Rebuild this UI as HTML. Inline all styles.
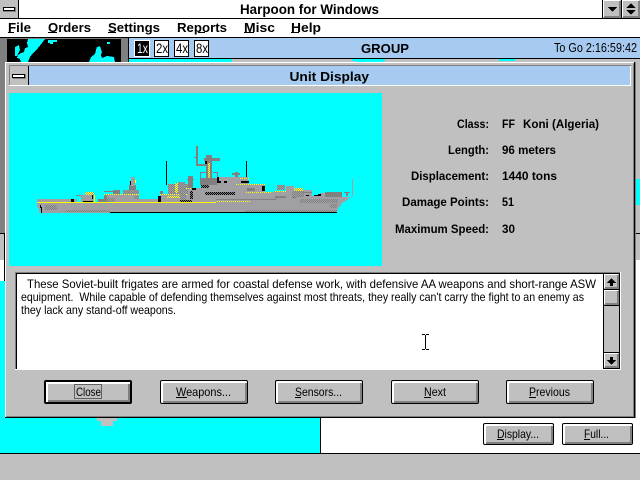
<!DOCTYPE html>
<html><head><meta charset="utf-8"><title>Harpoon for Windows</title>
<style>
html,body{margin:0;padding:0;width:640px;height:480px;overflow:hidden;background:#c0c0c0}
svg{position:absolute;left:0;top:0}
.b{position:absolute;box-sizing:border-box;border:1px solid #000;border-radius:2px;background:#c0c0c0;box-shadow:inset 2px 2px 0 #fff,inset -2px -2px 0 #808080}
text{font-family:"Liberation Sans",sans-serif;fill:#000;font-size:12px}
.bd{font-weight:bold}
.t{font-size:13px;font-weight:bold}
</style></head><body>
<svg width="640" height="480" shape-rendering="crispEdges">
<defs>
<pattern id="d" width="2" height="2" patternUnits="userSpaceOnUse"><rect width="2" height="2" fill="#a0a0a4"/><rect width="1" height="1" fill="#808080"/><rect x="1" y="1" width="1" height="1" fill="#808080"/></pattern>
<pattern id="k" width="2" height="2" patternUnits="userSpaceOnUse"><rect width="2" height="2" fill="#808080"/><rect width="1" height="1" fill="#000"/><rect x="1" y="1" width="1" height="1" fill="#000"/></pattern>
<pattern id="y" width="2" height="2" patternUnits="userSpaceOnUse"><rect width="2" height="2" fill="#a0a0a4"/><rect width="1" height="1" fill="#ff0"/><rect x="1" y="1" width="1" height="1" fill="#ff0"/></pattern>
</defs>
<rect width="640" height="480" fill="#c0c0c0"/>
<!-- title bar -->
<rect width="640" height="18" fill="#fff"/>
<rect y="18" width="640" height="1" fill="#000"/>
<rect width="18" height="18" fill="#c0c0c0"/>
<rect x="18" width="1" height="18" fill="#000"/>
<rect x="3" y="7" width="13" height="5" fill="#808080"/>
<rect x="3" y="7" width="12" height="4" fill="#000"/>
<rect x="4" y="8" width="10" height="2" fill="#fff"/>
<rect x="602" width="1" height="18" fill="#000"/>
<rect x="603" width="18" height="18" fill="#c0c0c0"/>
<rect x="603" width="17" height="1" fill="#fff"/><rect x="603" width="1" height="17" fill="#fff"/>
<rect x="604" y="16" width="17" height="2" fill="#808080"/><rect x="619" y="1" width="2" height="17" fill="#808080"/>
<rect x="621" width="1" height="18" fill="#000"/>
<rect x="622" width="18" height="18" fill="#c0c0c0"/>
<rect x="622" width="17" height="1" fill="#fff"/><rect x="622" width="1" height="17" fill="#fff"/>
<rect x="623" y="16" width="17" height="2" fill="#808080"/><rect x="638" y="1" width="2" height="17" fill="#808080"/>
<path d="M608 7h9l-4.500 5z" fill="#000"/>
<path d="M626.500 8h9l-4.500-5zM626.500 10h9l-4.500 5z" fill="#000"/>
<!-- menu -->
<rect y="19" width="640" height="18" fill="#fff"/>
<rect y="37" width="640" height="1" fill="#000"/>
<!-- left map panel -->
<rect y="38" width="128" height="195" fill="#808080"/>
<rect x="128" y="38" width="1" height="24" fill="#000"/>
<rect x="7" y="39" width="114" height="24" fill="#000"/>
<path d="M28 39h17l-3 4-4 5-5 5-3 4-2 5h-7l-1-3-3-1 1-3 3-2 3-1 1-4 3-1-1-4zM15 47l4-2 1 5-2 4-1 2-2 0z" fill="#0ff"/>
<path d="M48 40h9v2h-4v2h-3v-1h-2zM107 42h3v2h-3zM97 47l3-1 2 6-1 3 1 3 5-2 7 1 1 5h-26l2-5 4-3 1-4z" fill="#0ff"/>
<!-- toolbar -->
<rect x="129" y="38" width="511" height="20" fill="#a6caf0"/>
<rect x="129" y="58" width="511" height="1" fill="#000"/>
<rect x="129" y="59" width="511" height="4" fill="#c0c0c0"/>
<rect x="129" y="59" width="103" height="4" fill="#0ff"/>
<rect x="352" y="59" width="33" height="2" fill="#0ff"/><rect x="356" y="61" width="27" height="2" fill="#0ff"/>
<rect x="499" y="59" width="16" height="2" fill="#0ff"/>
<rect x="134" y="40" width="16" height="17" fill="#fff"/><rect x="135" y="41" width="14" height="15" fill="#000"/>
<rect x="154" y="40" width="15" height="17" fill="#000"/><rect x="155" y="41" width="13" height="15" fill="#fff"/>
<rect x="174" y="40" width="15" height="17" fill="#000"/><rect x="175" y="41" width="13" height="15" fill="#fff"/>
<rect x="194" y="40" width="15" height="17" fill="#000"/><rect x="195" y="41" width="13" height="15" fill="#fff"/>
<!-- underlying regions -->
<rect y="233" width="5" height="1" fill="#000"/>
<rect y="260" width="4" height="21" fill="#fff"/>
<rect x="4" y="234" width="1" height="47" fill="#000"/>
<rect x="635" y="233" width="5" height="1" fill="#000"/>
<rect x="635" y="179" width="5" height="26" fill="#0ff"/>
<rect x="635" y="260" width="5" height="158" fill="#fff"/>
<rect y="281" width="5" height="137" fill="#0ff"/>
<rect y="418" width="320" height="35" fill="#0ff"/>
<rect x="97" y="418" width="20" height="3" fill="#c0c0c0"/><rect x="101" y="421" width="12" height="5" fill="#c0c0c0"/>
<rect x="320" y="418" width="320" height="35" fill="#fff"/>
<rect x="320" y="418" width="1" height="35" fill="#000"/>
<rect y="453" width="640" height="1" fill="#000"/>
<!-- dialog -->
<rect x="5" y="62" width="629" height="355" fill="#c0c0c0"/>
<rect x="5" y="62" width="629" height="1" fill="#fff"/>
<rect x="5" y="62" width="1" height="355" fill="#fff"/>
<rect x="634" y="62" width="1" height="356" fill="#000"/>
<rect x="635" y="62" width="1" height="356" fill="#808080"/>
<rect x="5" y="417" width="630" height="1" fill="#000"/>
<rect x="6" y="416" width="628" height="1" fill="#808080"/>
<rect x="633" y="63" width="1" height="354" fill="#808080"/>
<rect x="9" y="65" width="622" height="1" fill="#808080"/>
<rect x="9" y="66" width="621" height="19" fill="#a6caf0"/>
<rect x="9" y="85" width="622" height="1" fill="#fff"/>
<rect x="630" y="66" width="1" height="20" fill="#fff"/>
<rect x="9" y="66" width="19" height="19" fill="#c0c0c0"/>
<rect x="9" y="66" width="1" height="19" fill="#808080"/>
<rect x="28" y="66" width="1" height="19" fill="#000"/>
<rect x="13" y="74" width="13" height="5" fill="#808080"/>
<rect x="12" y="74" width="13" height="4" fill="#000"/>
<rect x="13" y="75" width="11" height="2" fill="#fff"/>
<!-- ship picture -->
<rect x="9" y="93" width="373" height="173" fill="#0ff"/>
<g>
<!-- masts and lattice -->
<rect x="166" y="161" width="1" height="24" fill="#000"/>
<rect x="246" y="161" width="1" height="16" fill="#000"/>
<rect x="352" y="179" width="1" height="17" fill="#a0a0a4"/>
<rect x="196" y="146" width="2" height="20" fill="#808080"/>
<rect x="194" y="157" width="3" height="1" fill="#808080"/>
<rect x="197" y="164" width="10" height="2" fill="#808080"/>
<rect x="204" y="158" width="16" height="3" fill="#808080"/>
<rect x="206" y="155" width="6" height="25" fill="#808080"/>
<rect x="208" y="163" width="2" height="15" fill="url(#y)"/>
<rect x="205" y="161" width="2" height="3" fill="#000"/>
<rect x="200" y="172" width="6" height="1" fill="#808080"/><rect x="200" y="172" width="1" height="6" fill="#808080"/>
<rect x="213" y="172" width="5" height="1" fill="#808080"/><rect x="217" y="172" width="1" height="6" fill="#808080"/>
<rect x="232" y="173" width="8" height="2" fill="#808080"/><rect x="235" y="172" width="3" height="5" fill="#808080"/>
<!-- solid silhouette -->
<path d="M160 203v-9h8v-10h20v-8h5v12h8v-4h16v-7h31v8h17v7h21v-6h8v10h7v-6h11v6h8v-3h22v10z" fill="#a0a0a4"/>
<!-- aft details -->
<rect x="37" y="199" width="40" height="3" fill="#a0a0a4"/>
<rect x="76" y="195" width="7" height="1" fill="#808080"/>
<rect x="81" y="195" width="14" height="7" fill="#a0a0a4"/>
<rect x="85" y="192" width="9" height="3" fill="url(#y)"/>
<rect x="92" y="195" width="1" height="4" fill="#000"/>
<rect x="94" y="195" width="1" height="7" fill="#ff0"/>
<rect x="83" y="201" width="10" height="1" fill="#000"/>
<rect x="71" y="199" width="3" height="3" fill="#000"/>
<rect x="98" y="199" width="6" height="3" fill="#808080"/>
<rect x="104" y="191" width="9" height="1" fill="#808080"/>
<rect x="113" y="190" width="7" height="4" fill="#808080"/>
<rect x="123" y="190" width="16" height="4" fill="url(#d)"/>
<rect x="129" y="185" width="7" height="5" fill="#808080"/>
<rect x="131" y="177" width="4" height="9" fill="#a0a0a4"/>
<rect x="130" y="181" width="1" height="4" fill="#000"/><rect x="135" y="180" width="1" height="3" fill="#ff0"/>
<rect x="104" y="194" width="35" height="8" fill="#a0a0a4"/>
<rect x="104" y="194" width="35" height="1" fill="url(#y)"/>
<rect x="104" y="195" width="3" height="7" fill="#808080"/>
<rect x="107" y="198" width="8" height="4" fill="url(#d)"/>
<rect x="134" y="196" width="5" height="3" fill="url(#d)"/>
<rect x="139" y="199" width="21" height="3" fill="#a0a0a4"/>
<rect x="158" y="196" width="3" height="6" fill="#000"/>
<!-- forward details -->
<rect x="160" y="194" width="27" height="1" fill="url(#y)"/>
<rect x="167" y="196" width="16" height="2" fill="url(#y)"/>
<rect x="180" y="200" width="12" height="2" fill="url(#k)"/>
<rect x="160" y="191" width="3" height="3" fill="#808080"/>
<rect x="168" y="184" width="20" height="10" fill="url(#d)"/>
<rect x="175" y="183" width="3" height="10" fill="url(#y)"/>
<rect x="178" y="182" width="7" height="3" fill="url(#d)"/>
<rect x="188" y="176" width="5" height="12" fill="#808080"/>
<rect x="187" y="179" width="7" height="1" fill="#808080"/>
<rect x="180" y="188" width="6" height="12" fill="url(#d)"/>
<rect x="186" y="188" width="7" height="1" fill="url(#y)"/>
<rect x="192" y="188" width="4" height="2" fill="#000"/>
<rect x="190" y="191" width="3" height="8" fill="url(#k)"/>
<rect x="200" y="178" width="17" height="7" fill="#808080"/>
<rect x="201" y="185" width="8" height="3" fill="url(#k)"/>
<rect x="205" y="192" width="30" height="3" fill="url(#k)"/>
<rect x="217" y="177" width="2" height="4" fill="#000"/>
<rect x="217" y="181" width="4" height="2" fill="#000"/>
<rect x="224" y="181" width="3" height="2" fill="#000"/>
<rect x="239" y="178" width="10" height="1" fill="url(#y)"/>
<rect x="241" y="181" width="8" height="2" fill="#000"/>
<rect x="236" y="184" width="29" height="1" fill="url(#y)"/>
<rect x="247" y="188" width="8" height="3" fill="#808080"/>
<rect x="262" y="186" width="3" height="5" fill="#000"/>
<rect x="246" y="192" width="25" height="1" fill="url(#y)"/>
<rect x="277" y="185" width="8" height="5" fill="url(#d)"/>
<rect x="274" y="191" width="12" height="1" fill="url(#y)"/>
<rect x="275" y="196" width="11" height="3" fill="#808080"/>
<rect x="292" y="191" width="12" height="6" fill="url(#d)"/>
<rect x="294" y="188" width="9" height="3" fill="url(#y)"/>
<rect x="293" y="197" width="6" height="2" fill="url(#k)"/>
<rect x="303" y="192" width="9" height="1" fill="#808080"/>
<rect x="306" y="195" width="3" height="1" fill="#000"/><rect x="314" y="195" width="4" height="1" fill="#000"/><rect x="318" y="194" width="3" height="2" fill="#000"/>
<rect x="325" y="192" width="17" height="5" fill="#808080"/>
<rect x="344" y="192" width="6" height="1" fill="#808080"/><rect x="346" y="192" width="2" height="4" fill="#808080"/>
<!-- hull -->
<path d="M37 203h178v-4h50l35 -2h52v-2h1l-7 6-3 1-5 7-2 4h-294l-3-1v-3l-2-2z" fill="#a0a0a4"/>
<rect x="37" y="202" width="179" height="1" fill="#ff0"/>
<rect x="216" y="199" width="60" height="1" fill="#808080"/>
<rect x="216" y="201" width="35" height="1" fill="url(#y)"/>
<rect x="65" y="210" width="45" height="2" fill="url(#d)"/>
<rect x="45" y="205" width="12" height="5" fill="url(#d)"/>
<rect x="245" y="210" width="92" height="2" fill="url(#d)"/>
<rect x="300" y="199" width="38" height="4" fill="url(#d)"/>
<rect x="330" y="204" width="7" height="4" fill="url(#d)"/>
<rect x="110" y="212" width="227" height="1" fill="#000"/>
<rect x="40" y="205" width="1" height="3" fill="#000"/><rect x="41" y="207" width="1" height="6" fill="#000"/>
</g>
<!-- text box -->
<rect x="15" y="272" width="606" height="98" fill="#fff"/>
<rect x="15" y="272" width="605" height="1" fill="#808080"/>
<rect x="15" y="272" width="1" height="97" fill="#808080"/>
<rect x="16" y="273" width="604" height="1" fill="#000"/>
<rect x="16" y="273" width="1" height="96" fill="#000"/>
<!-- scrollbar -->
<rect x="603" y="273" width="17" height="96" fill="#000"/>
<rect x="604" y="274" width="15" height="94" fill="#c0c0c0"/>
<rect x="604" y="289" width="15" height="1" fill="#000"/>
<rect x="604" y="305" width="15" height="1" fill="#000"/>
<rect x="604" y="352" width="15" height="1" fill="#000"/>
<g fill="#fff">
<rect x="604" y="274" width="14" height="1"/><rect x="604" y="274" width="1" height="14"/>
<rect x="604" y="290" width="14" height="1"/><rect x="604" y="290" width="1" height="14"/>
<rect x="604" y="353" width="14" height="1"/><rect x="604" y="353" width="1" height="14"/>
</g>
<g fill="#808080">
<rect x="605" y="287" width="14" height="2"/><rect x="617" y="275" width="2" height="14"/>
<rect x="605" y="303" width="14" height="2"/><rect x="617" y="291" width="2" height="14"/>
<rect x="605" y="366" width="14" height="2"/><rect x="617" y="354" width="2" height="14"/>
</g>
<path d="M607 283l4.500-5 4.500 5h-3v3h-3v-3z" fill="#000"/>
<path d="M607 360l4.500 5 4.500-5h-3v-3h-3v3z" fill="#000"/>
<!-- I-beam -->
<g fill="#000">
<rect x="425" y="335" width="1" height="14"/>
<rect x="422" y="334" width="3" height="1"/><rect x="426" y="334" width="3" height="1"/>
<rect x="422" y="349" width="3" height="1"/><rect x="426" y="349" width="3" height="1"/>
</g>
</svg>
<div class="b" style="left:44px;top:380px;width:88px;height:24px;border:2px solid #000"></div>
<div class="b" style="left:160px;top:380px;width:88px;height:24px"></div>
<div class="b" style="left:275px;top:380px;width:88px;height:24px"></div>
<div class="b" style="left:391px;top:380px;width:88px;height:24px"></div>
<div class="b" style="left:506px;top:380px;width:88px;height:24px"></div>
<div class="b" style="left:483px;top:423px;width:71px;height:22px"></div>
<div class="b" style="left:562px;top:423px;width:71px;height:22px"></div>
<svg width="640" height="480">
<text class="bd" style="font-size:14px" x="240" y="14" textLength="139" lengthAdjust="spacingAndGlyphs">Harpoon for Windows</text>
<text class="t" x="8" y="32" textLength="23" lengthAdjust="spacingAndGlyphs">File</text>
<text class="t" x="48" y="32" textLength="43" lengthAdjust="spacingAndGlyphs">Orders</text>
<text class="t" x="108" y="32" textLength="52" lengthAdjust="spacingAndGlyphs">Settings</text>
<text class="t" x="177" y="32" textLength="50" lengthAdjust="spacingAndGlyphs">Reports</text>
<text class="t" x="244" y="32" textLength="31" lengthAdjust="spacingAndGlyphs">Misc</text>
<text class="t" x="291" y="32" textLength="30" lengthAdjust="spacingAndGlyphs">Help</text>
<g shape-rendering="crispEdges" fill="#000">
<rect x="8" y="32" width="6" height="1"/><rect x="48" y="32" width="9" height="1"/><rect x="108" y="32" width="8" height="1"/><rect x="198" y="32" width="7" height="1"/><rect x="244" y="32" width="10" height="1"/><rect x="291" y="32" width="8" height="1"/>
</g>
<text x="137" y="53" style="font-size:14px;fill:#fff" textLength="11" lengthAdjust="spacingAndGlyphs">1x</text>
<text x="156" y="53" style="font-size:14px" textLength="12" lengthAdjust="spacingAndGlyphs">2x</text>
<text x="176" y="53" style="font-size:14px" textLength="12" lengthAdjust="spacingAndGlyphs">4x</text>
<text x="196" y="53" style="font-size:14px" textLength="12" lengthAdjust="spacingAndGlyphs">8x</text>
<text class="t" x="361" y="53" textLength="48" lengthAdjust="spacingAndGlyphs">GROUP</text>
<text x="554" y="52" style="font-size:13px" textLength="83" lengthAdjust="spacingAndGlyphs">To Go 2:16:59:42</text>
<text class="t" x="289.500" y="81" textLength="79.500" lengthAdjust="spacingAndGlyphs">Unit Display</text>
<text class="bd" x="457" y="128" textLength="32" lengthAdjust="spacingAndGlyphs">Class:</text>
<text class="bd" x="448" y="154" textLength="41" lengthAdjust="spacingAndGlyphs">Length:</text>
<text class="bd" x="411" y="180" textLength="78" lengthAdjust="spacingAndGlyphs">Displacement:</text>
<text class="bd" x="402" y="206" textLength="87" lengthAdjust="spacingAndGlyphs">Damage Points:</text>
<text class="bd" x="395" y="233" textLength="94" lengthAdjust="spacingAndGlyphs">Maximum Speed:</text>
<text class="bd" x="502" y="128" textLength="13" lengthAdjust="spacingAndGlyphs">FF</text>
<text class="bd" x="523" y="128" textLength="76" lengthAdjust="spacingAndGlyphs">Koni (Algeria)</text>
<text class="bd" x="502" y="154" textLength="54" lengthAdjust="spacingAndGlyphs">96 meters</text>
<text class="bd" x="502" y="180" textLength="55" lengthAdjust="spacingAndGlyphs">1440 tons</text>
<text class="bd" x="502" y="206" textLength="12" lengthAdjust="spacingAndGlyphs">51</text>
<text class="bd" x="502" y="233" textLength="13" lengthAdjust="spacingAndGlyphs">30</text>
<text x="27" y="288" textLength="569" lengthAdjust="spacingAndGlyphs">These Soviet-built frigates are armed for coastal defense work, with defensive AA weapons and short-range ASW</text>
<text x="21" y="301" textLength="563" lengthAdjust="spacingAndGlyphs" xml:space="preserve">equipment.  While capable of defending themselves against most threats, they really can't carry the fight to an enemy as</text>
<text x="21" y="314" textLength="155" lengthAdjust="spacingAndGlyphs">they lack any stand-off weapons.</text>
<text x="76" y="396" textLength="25" lengthAdjust="spacingAndGlyphs">Close</text>
<text x="176" y="396" textLength="55" lengthAdjust="spacingAndGlyphs">Weapons...</text>
<text x="295" y="396" textLength="47" lengthAdjust="spacingAndGlyphs">Sensors...</text>
<text x="424" y="396" textLength="22" lengthAdjust="spacingAndGlyphs">Next</text>
<text x="529" y="396" textLength="41" lengthAdjust="spacingAndGlyphs">Previous</text>
<text x="497" y="438" textLength="42" lengthAdjust="spacingAndGlyphs">Display...</text>
<text x="584" y="438" textLength="25" lengthAdjust="spacingAndGlyphs">Full...</text>
<g shape-rendering="crispEdges" fill="#000">
<rect x="176" y="397" width="11" height="1"/><rect x="295" y="397" width="6" height="1"/><rect x="424" y="397" width="7" height="1"/><rect x="529" y="397" width="7" height="1"/><rect x="497" y="439" width="7" height="1"/><rect x="584" y="439" width="6" height="1"/>
</g>
<rect x="74.500" y="384.500" width="27" height="14" fill="none" stroke="#000" stroke-dasharray="1 1" shape-rendering="crispEdges"/>
</svg>
</body></html>
